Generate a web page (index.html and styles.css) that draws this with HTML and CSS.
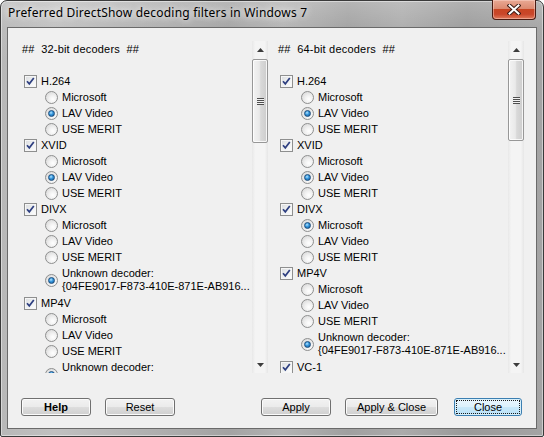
FILE: index.html
```html
<!DOCTYPE html>
<html>
<head>
<meta charset="utf-8">
<link rel="stylesheet" href="styles.css">
</head>
<body>
<div class="window">
  <div class="titlebar">
    <span class="title">Preferred DirectShow decoding filters in Windows 7</span>
    <div class="xbtn">
      <svg width="14" height="11" viewBox="0 0 14 11"><path d="M2.5 1.5 L11.5 9.5 M11.5 1.5 L2.5 9.5" stroke="#3a1a14" stroke-width="4" stroke-linecap="square" fill="none"/><path d="M2.5 1.5 L11.5 9.5 M11.5 1.5 L2.5 9.5" stroke="#ffffff" stroke-width="2" stroke-linecap="square" fill="none"/></svg>
    </div>
  </div>
  <div class="client">
    <div class="panels">
      <div class="panel">
        <div class="list">
          <div class="hdr">##  32-bit decoders  ##</div>
          <div class="grp"><span class="cb"><svg width="11" height="11" viewBox="0 0 11 11"><path d="M2 5.2 L4.3 7.8 L8.8 2" stroke="#2e3f80" stroke-width="1.7" fill="none"/></svg></span>H.264</div>
          <div class="opt"><span class="rb"></span>Microsoft</div>
          <div class="opt"><span class="rb on"></span>LAV Video</div>
          <div class="opt"><span class="rb"></span>USE MERIT</div>
          <div class="grp"><span class="cb"><svg width="11" height="11" viewBox="0 0 11 11"><path d="M2 5.2 L4.3 7.8 L8.8 2" stroke="#2e3f80" stroke-width="1.7" fill="none"/></svg></span>XVID</div>
          <div class="opt"><span class="rb"></span>Microsoft</div>
          <div class="opt"><span class="rb on"></span>LAV Video</div>
          <div class="opt"><span class="rb"></span>USE MERIT</div>
          <div class="grp"><span class="cb"><svg width="11" height="11" viewBox="0 0 11 11"><path d="M2 5.2 L4.3 7.8 L8.8 2" stroke="#2e3f80" stroke-width="1.7" fill="none"/></svg></span>DIVX</div>
          <div class="opt"><span class="rb"></span>Microsoft</div>
          <div class="opt"><span class="rb"></span>LAV Video</div>
          <div class="opt"><span class="rb"></span>USE MERIT</div>
          <div class="opt two"><span class="rb on"></span><span class="lbl">Unknown decoder:<br>{04FE9017-F873-410E-871E-AB916...</span></div>
          <div class="grp"><span class="cb"><svg width="11" height="11" viewBox="0 0 11 11"><path d="M2 5.2 L4.3 7.8 L8.8 2" stroke="#2e3f80" stroke-width="1.7" fill="none"/></svg></span>MP4V</div>
          <div class="opt"><span class="rb"></span>Microsoft</div>
          <div class="opt"><span class="rb"></span>LAV Video</div>
          <div class="opt"><span class="rb"></span>USE MERIT</div>
          <div class="opt two"><span class="rb on"></span><span class="lbl">Unknown decoder:<br>{04FE9017-F873-410E-871E-AB916...</span></div>
        </div>
        <div class="sb">
          <div class="sbbtn"><svg width="7" height="4" viewBox="0 0 7 4"><polygon points="0,4 3.5,0 7,4" fill="#3c3c3c"/></svg></div>
          <div class="thumb t1"><span class="grip"></span></div>
          <div class="track"></div>
          <div class="sbbtn"><svg width="7" height="4" viewBox="0 0 7 4"><polygon points="0,0 7,0 3.5,4" fill="#3c3c3c"/></svg></div>
        </div>
      </div>
      <div class="panel">
        <div class="list">
          <div class="hdr">##  64-bit decoders  ##</div>
          <div class="grp"><span class="cb"><svg width="11" height="11" viewBox="0 0 11 11"><path d="M2 5.2 L4.3 7.8 L8.8 2" stroke="#2e3f80" stroke-width="1.7" fill="none"/></svg></span>H.264</div>
          <div class="opt"><span class="rb"></span>Microsoft</div>
          <div class="opt"><span class="rb on"></span>LAV Video</div>
          <div class="opt"><span class="rb"></span>USE MERIT</div>
          <div class="grp"><span class="cb"><svg width="11" height="11" viewBox="0 0 11 11"><path d="M2 5.2 L4.3 7.8 L8.8 2" stroke="#2e3f80" stroke-width="1.7" fill="none"/></svg></span>XVID</div>
          <div class="opt"><span class="rb"></span>Microsoft</div>
          <div class="opt"><span class="rb on"></span>LAV Video</div>
          <div class="opt"><span class="rb"></span>USE MERIT</div>
          <div class="grp"><span class="cb"><svg width="11" height="11" viewBox="0 0 11 11"><path d="M2 5.2 L4.3 7.8 L8.8 2" stroke="#2e3f80" stroke-width="1.7" fill="none"/></svg></span>DIVX</div>
          <div class="opt"><span class="rb on"></span>Microsoft</div>
          <div class="opt"><span class="rb"></span>LAV Video</div>
          <div class="opt"><span class="rb"></span>USE MERIT</div>
          <div class="grp"><span class="cb"><svg width="11" height="11" viewBox="0 0 11 11"><path d="M2 5.2 L4.3 7.8 L8.8 2" stroke="#2e3f80" stroke-width="1.7" fill="none"/></svg></span>MP4V</div>
          <div class="opt"><span class="rb"></span>Microsoft</div>
          <div class="opt"><span class="rb"></span>LAV Video</div>
          <div class="opt"><span class="rb"></span>USE MERIT</div>
          <div class="opt two"><span class="rb on"></span><span class="lbl">Unknown decoder:<br>{04FE9017-F873-410E-871E-AB916...</span></div>
          <div class="grp"><span class="cb"><svg width="11" height="11" viewBox="0 0 11 11"><path d="M2 5.2 L4.3 7.8 L8.8 2" stroke="#2e3f80" stroke-width="1.7" fill="none"/></svg></span>VC-1</div>
        </div>
        <div class="sb">
          <div class="sbbtn"><svg width="7" height="4" viewBox="0 0 7 4"><polygon points="0,4 3.5,0 7,4" fill="#3c3c3c"/></svg></div>
          <div class="thumb t2"><span class="grip"></span></div>
          <div class="track"></div>
          <div class="sbbtn"><svg width="7" height="4" viewBox="0 0 7 4"><polygon points="0,0 7,0 3.5,4" fill="#3c3c3c"/></svg></div>
        </div>
      </div>
    </div>
    <div class="buttons">
      <button class="btn help">Help</button>
      <button class="btn reset">Reset</button>
      <button class="btn apply">Apply</button>
      <button class="btn applyclose">Apply &amp; Close</button>
      <button class="btn def"><span class="focus">Close</span></button>
    </div>
  </div>
</div>
</body>
</html>
```
FILE: styles.css
```css
html, body {
  margin: 0;
  padding: 0;
  background: #ffffff;
}
body {
  width: 544px;
  height: 437px;
  overflow: hidden;
  font-family: "Liberation Sans", Arial, sans-serif;
  font-size: 11px;
  color: #000;
}
.window {
  box-sizing: border-box;
  width: 544px;
  height: 437px;
  border: 1px solid #3a3a3a;
  border-radius: 7px 7px 2px 2px;
  padding: 0 6px 7px 6px;
  display: flex;
  flex-direction: column;
  background:
    linear-gradient(180deg, rgba(255,255,255,0.22) 0px, rgba(255,255,255,0.05) 27px, rgba(0,0,0,0) 60px),
    linear-gradient(90deg, #b8b8b8 0%, #c0c0c0 10%, #b2b2b2 25%, #a3a3a3 42%, #b3b3b3 52%, #a0a0a0 64%, #ababab 74%, #9a9a9a 86%, #a4a4a4 100%);
  box-shadow: inset 0 0 0 1px rgba(255,255,255,0.45);
}
.titlebar {
  height: 26px;
  display: flex;
  align-items: flex-start;
}
.title {
  font-family: "Noto Sans", "Open Sans", sans-serif;
  font-size: 12px;
  letter-spacing: 0.2px;
  line-height: 16px;
  margin: 4px 0 0 1px;
  color: #000;
  white-space: nowrap;
  text-shadow: 0 0 6px rgba(255,255,255,0.9), 0 0 10px rgba(255,255,255,0.7);
}
.xbtn {
  margin: -1px 1px 0 auto;
  width: 44px;
  height: 20px;
  box-sizing: border-box;
  border: 1px solid #4a1b12;
  border-top: none;
  border-radius: 0 0 4px 4px;
  background: linear-gradient(180deg, #e9a994 0%, #dc8a71 45%, #c84523 50%, #c9462a 75%, #e07a5c 100%);
  box-shadow: inset 0 0 0 1px rgba(255,220,210,0.45);
  display: flex;
  align-items: center;
  justify-content: center;
}
.client {
  flex: 1;
  border: 1px solid #6a6a6a;
  background: #f0f0f0;
  display: flex;
  flex-direction: column;
}
.panels {
  display: flex;
  margin: 13px 0 0 4px;
  height: 332px;
}
.panel {
  width: 256px;
  display: flex;
  overflow: hidden;
}
.list {
  width: 240px;
  overflow: hidden;
}
.hdr {
  white-space: pre;
  line-height: 16px;
  height: 16px;
  margin: 0 0 16px 10px;
  letter-spacing: 0.2px;
}
.grp {
  display: flex;
  align-items: flex-start;
  height: 16px;
  line-height: 16px;
  padding-left: 12px;
  white-space: nowrap;
}
.opt {
  display: flex;
  align-items: flex-start;
  height: 16px;
  line-height: 16px;
  padding-left: 33px;
  white-space: nowrap;
}
.opt.two {
  height: 30px;
  align-items: center;
  line-height: 13px;
}
.cb {
  flex: none;
  box-sizing: border-box;
  width: 13px;
  height: 13px;
  margin: 2px 4px 0 0;
  border: 1px solid #8e8f8f;
  background: linear-gradient(135deg, #d9dbde 0%, #eceeef 45%, #ffffff 100%);
  box-shadow: inset 0 0 0 1px #f6f6f6;
  display: flex;
}
.rb {
  flex: none;
  box-sizing: border-box;
  width: 13px;
  height: 13px;
  margin: 2px 4px 0 0;
  border: 1px solid #8e8f8f;
  border-radius: 50%;
  background: radial-gradient(circle at 62% 65%, #ffffff 0%, #f2f2f2 35%, #d2d2d2 100%);
  display: flex;
  align-items: center;
  justify-content: center;
}
.two .rb {
  margin-top: 0;
}
.rb.on::after {
  content: "";
  width: 5px;
  height: 5px;
  border-radius: 50%;
  border: 1px solid #1c4d7c;
  background: radial-gradient(circle at 40% 35%, #b8e6ff 0%, #3b9be0 40%, #0b5394 100%);
}
.sb {
  width: 16px;
  display: flex;
  flex-direction: column;
  background: linear-gradient(90deg, #e8e8e8 0%, #f4f4f4 20%, #f4f4f4 80%, #e6e6e6 100%);
}
.sbbtn {
  height: 17px;
  flex: none;
  display: flex;
  align-items: center;
  justify-content: center;
}
.thumb {
  flex: none;
  box-sizing: border-box;
  margin-top: 1px;
  width: 16px;
  border: 1px solid #979797;
  border-radius: 2px;
  background: linear-gradient(90deg, #f3f3f3 0%, #e9e9e9 45%, #d9d9d9 55%, #cdcdcd 100%);
  box-shadow: inset 0 0 0 1px rgba(255,255,255,0.8);
  display: flex;
  align-items: center;
  justify-content: center;
}
.t1 { height: 84px; }
.t2 { height: 82px; }
.grip {
  width: 7px;
  height: 7px;
  background: repeating-linear-gradient(180deg, #4f4f4f 0px, #4f4f4f 1px, #f2f2f2 1px, #f2f2f2 2px);
}
.track {
  flex: 1;
}
.buttons {
  display: flex;
  margin-top: 25px;
  padding: 0 14px 0 13px;
}
.btn {
  box-sizing: border-box;
  height: 18px;
  width: 70px;
  padding: 0;
  margin: 0;
  border: 1px solid #707070;
  border-radius: 3px;
  background: linear-gradient(180deg, #f2f2f2 0%, #ebebeb 48%, #dddddd 52%, #cfcfcf 100%);
  box-shadow: inset 0 0 0 1px #fbfbfb;
  font-family: "Liberation Sans", Arial, sans-serif;
  font-size: 11px;
  color: #000;
  display: flex;
  align-items: center;
  justify-content: center;
}
.help { font-weight: bold; }
.reset { margin-left: 14px; }
.apply { margin-left: auto; }
.applyclose { margin-left: 14px; width: 93px; }
.def {
  margin-left: 16px;
  width: 68px;
  border-color: #3c7fb1;
  background: linear-gradient(180deg, #eaf6fd 0%, #dcf1fc 48%, #c9e9fa 52%, #b9e1f7 100%);
  box-shadow: inset 0 0 0 1px #d8f0fb;
}
.focus {
  align-self: stretch;
  flex: 1;
  margin: 1px;
  border: 1px dotted #1a1a1a;
  display: flex;
  align-items: center;
  justify-content: center;
}
```
